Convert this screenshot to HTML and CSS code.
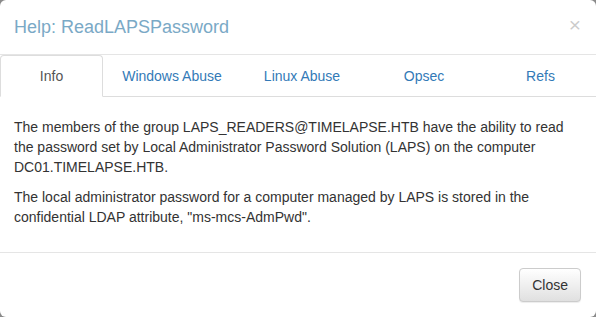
FILE: index.html
```html
<!DOCTYPE html>
<html lang="en">

<head>
  <meta charset="UTF-8" />
  <meta name="viewport" content="width=device-width, initial-scale=1.0" />
  <title>Help: ReadLAPSPassword</title>
  <link rel="stylesheet" href="styles.css">
</head>

<body>
  <div class="modal-content">
    <div class="modal-header">
      <h4 class="modal-title">Help: ReadLAPSPassword</h4>
      <button class="close" type="button">&times;</button>
    </div>

    <ul class="nav-tabs">
      <li class="active"><a href="#">Info</a></li>
      <li><a href="#">Windows Abuse</a></li>
      <li><a href="#">Linux Abuse</a></li>
      <li><a href="#">Opsec</a></li>
      <li><a href="#">Refs</a></li>
    </ul>

    <div class="tab-content">
      <p>
        The members of the group LAPS_READERS@TIMELAPSE.HTB have the ability to read the password set by Local
        Administrator Password Solution (LAPS) on the computer DC01.TIMELAPSE.HTB.
      </p>
      <p>
        The local administrator password for a computer managed by LAPS is stored in the confidential LDAP
        attribute, "ms-mcs-AdmPwd".
      </p>
    </div>

    <div class="modal-footer">
      <button class="btn" type="button">Close</button>
    </div>
  </div>
</body>

</html>
```

FILE: styles.css
```css
body {
  margin: 0;
  background-color: #8a8a8a;
  font-family: "Liberation Sans", Arial, sans-serif;
  font-size: 14px;
  line-height: 20px;
  color: #333;
}

.modal-content {
  background-color: #fff;
  border-radius: 6px;
  height: 317px;
  overflow: hidden;
}

.modal-header {
  display: flex;
  justify-content: space-between;
  align-items: flex-start;
  padding: 15px 15px 14px 14px;
  border-bottom: 1px solid #e5e5e5;
}

.modal-title {
  margin: 0;
  font-size: 18px;
  font-weight: normal;
  line-height: 25px;
  color: #7aa9c6;
}

.close {
  margin-top: -1px;
  padding: 0;
  border: none;
  background: none;
  font-family: "Liberation Sans", Arial, sans-serif;
  font-size: 21px;
  font-weight: normal;
  line-height: 1;
  color: #000;
  opacity: 0.2;
  cursor: pointer;
}

.nav-tabs {
  display: grid;
  grid-template-columns: 103px 138px 122px 122px 1fr;
  margin: 0;
  padding: 0;
  list-style: none;
  border-bottom: 1px solid #ddd;
}

.nav-tabs li {
  margin-bottom: -1px;
}

.nav-tabs a {
  display: block;
  padding: 10px 0;
  text-align: center;
  color: #337ab7;
  text-decoration: none;
  border: 1px solid transparent;
  border-bottom-color: #ddd;
  border-radius: 4px 4px 0 0;
}

.nav-tabs li.active a {
  color: #555;
  background-color: #fff;
  border-color: #ddd;
  border-bottom-color: transparent;
}

.tab-content {
  padding: 20px 14px 15px 14px;
}

.tab-content p {
  margin: 0 0 10px;
}

.modal-footer {
  padding: 15px;
  text-align: right;
  border-top: 1px solid #e5e5e5;
}

.btn {
  height: 34px;
  padding: 6px 12px;
  font-family: "Liberation Sans", Arial, sans-serif;
  font-size: 14px;
  line-height: 20px;
  color: #333;
  background-image: linear-gradient(to bottom, #fff 0, #e0e0e0 100%);
  border: 1px solid #ccc;
  border-radius: 4px;
  box-shadow: inset 0 1px 0 rgba(255, 255, 255, 0.15), 0 1px 1px rgba(0, 0, 0, 0.075);
  cursor: pointer;
}
```
